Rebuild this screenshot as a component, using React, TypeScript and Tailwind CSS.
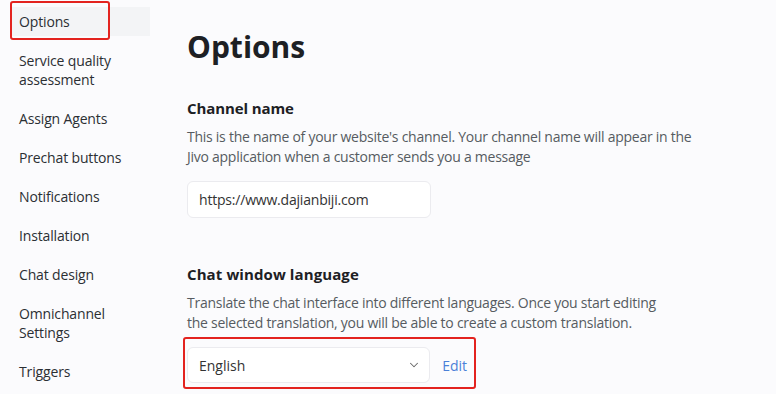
import React from 'react';
import { ChevronDown } from 'lucide-react';

const menuItems: { label: React.ReactNode; active?: boolean }[] = [
  { label: 'Options', active: true },
  { label: <>Service quality<br />assessment</> },
  { label: 'Assign Agents' },
  { label: 'Prechat buttons' },
  { label: 'Notifications' },
  { label: 'Installation' },
  { label: 'Chat design' },
  { label: <>Omnichannel<br />Settings</> },
  { label: 'Triggers' },
];

const font = { fontFamily: '"Open Sans", "Noto Sans", sans-serif' };

export default function App() {
  return (
    <div
      className="relative flex h-[394px] w-[776px] overflow-hidden bg-[#fbfbfd] text-[#333]"
      style={font}
    >
      {/* sidebar */}
      <nav className="flex w-[150px] shrink-0 flex-col gap-[10px] pl-[10px] pt-[7px]">
        {menuItems.map((item, i) => (
          <div
            key={i}
            className={
              'relative py-[5px] pl-[9px] text-[14px] leading-[19px] tracking-[-0.15px] text-[#2b2f33] ' +
              (item.active ? 'bg-[#f3f4f6]' : '')
            }
          >
            {item.label}
            {item.active && (
              <div className="absolute -top-[6px] -bottom-[4px] left-0 w-[100px] rounded-[3px] border-2 border-[#e3231f]" />
            )}
          </div>
        ))}
      </nav>

      {/* content */}
      <main className="flex flex-col pl-[37px] pt-[27px]">
        <h1 className="text-[30px] font-bold leading-[40px] text-[#1d2024]">Options</h1>

        <h2 className="mt-[29px] text-[15px] font-bold leading-[24px] tracking-[-0.1px] text-[#1d2024]">Channel name</h2>
        <p className="mt-[7px] whitespace-nowrap text-[14px] leading-[20px] tracking-[-0.26px] text-[#565b61]">
          This is the name of your website's channel. Your channel name will appear in the
          <br />
          Jivo application when a customer sends you a message
        </p>
        <div className="mt-[14px] flex h-[37px] w-[244px] items-center rounded-[6px] border border-[#ebebef] bg-white px-[11px] text-[14px] tracking-[-0.2px] text-[#333]">
          https://www.dajianbiji.com
        </div>

        <h2 className="mt-[44px] text-[15px] font-bold leading-[24px] tracking-[0.1px] text-[#1d2024]">Chat window language</h2>
        <p className="mt-[7px] whitespace-nowrap text-[14px] leading-[20px] tracking-[-0.26px] text-[#565b61]">
          Translate the chat interface into different languages. Once you start editing
          <br />
          the selected translation, you will be able to create a custom translation.
        </p>
        <div className="relative mt-[14px] flex w-[280px] items-center gap-[12px]">
          <div className="flex h-[36px] w-[244px] items-center justify-between rounded-[6px] border border-[#ebebef] bg-white pl-[11px] pr-[8px] text-[14px] text-[#333]">
            <span>English</span>
            <ChevronDown size={14} strokeWidth={1.75} className="text-[#666]" />
          </div>
          <span className="text-[14px] text-[#4a80d8]">Edit</span>
          <div className="absolute -top-[10px] -bottom-[6px] -left-[4px] -right-[9px] rounded-[3px] border-2 border-[#e3231f]" />
        </div>
      </main>
    </div>
  );
}
